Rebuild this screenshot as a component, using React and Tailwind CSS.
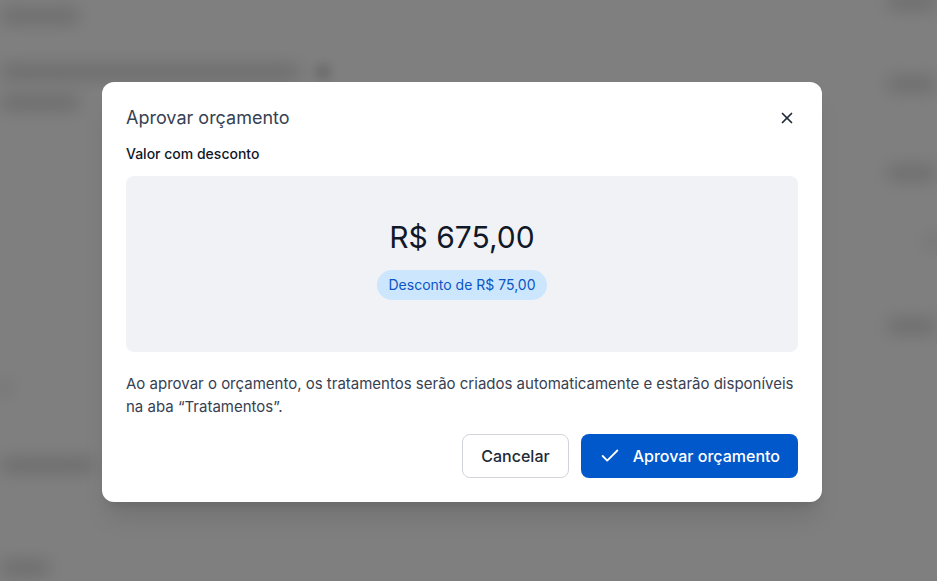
import { Check, X } from "lucide-react";

const Bar = ({ className }) => (
  <div className={`h-[12px] rounded-full bg-[#cdcdcd] blur-[9px] ${className}`} />
);

const BackgroundPage = () => {
  return (
    <div className="flex justify-between h-[581px] bg-white overflow-hidden">
      <div className="flex flex-col pt-[10px]">
        <Bar className="w-[80px]" />
        <div className="flex items-center gap-4 mt-[43px]">
          <Bar className="w-[300px]" />
          <div className="w-[14px] h-[14px] rounded-full bg-[#c4c4c4] blur-[6px]" />
        </div>
        <Bar className="w-[80px] mt-[18px]" />
        <Bar className="w-[10px] mt-[272px]" />
        <Bar className="w-[95px] mt-[66px]" />
        <Bar className="w-[50px] mt-[91px]" />
      </div>
      <div className="flex flex-col items-end pt-0">
        <Bar className="w-[50px] -mt-[4px]" />
        <Bar className="w-[50px] mt-[70px]" />
        <Bar className="w-[50px] mt-[77px]" />
        <Bar className="w-[10px] mt-[56px]" />
        <Bar className="w-[50px] mt-[73px]" />
      </div>
    </div>
  );
};

const App = () => {
  return (
    <div
      className="relative w-[937px] h-[581px] overflow-hidden"
      style={{ fontFamily: "Inter, 'Noto Sans', sans-serif" }}
    >
      <BackgroundPage />
      <div className="absolute inset-0 bg-black/50 flex items-start justify-start pt-[82px] pl-[102px]">
        <div className="w-[720px] bg-white rounded-xl px-6 pt-6 pb-6 shadow-xl">
          <div className="flex items-center justify-between h-6">
            <h2 className="text-[18px] leading-6 text-[#374151]">Aprovar orçamento</h2>
            <button className="text-[#1f2937] mr-[2px]">
              <X size={18} strokeWidth={2.25} />
            </button>
          </div>

          <p className="mt-[14px] text-sm leading-5 font-medium text-[#111827]">
            Valor com desconto
          </p>

          <div className="mt-3 h-[176px] rounded-lg bg-[#f0f2f5] flex flex-col items-center justify-center gap-[15px] pb-[10px]">
            <span className="text-[30px] leading-9 font-normal text-[#111827]">
              R$ 675,00
            </span>
            <span className="px-3 h-[30px] flex items-center rounded-full bg-[#cce6fd] text-sm text-[#0b55c4]">
              Desconto de R$ 75,00
            </span>
          </div>

          <p className="mt-[20px] text-[15px] leading-[23px] text-[#374151]">
            Ao aprovar o orçamento, os tratamentos serão criados automaticamente e estarão disponíveis na aba “Tratamentos”.
          </p>

          <div className="mt-4 flex justify-end gap-3">
            <button className="h-11 px-[18px] rounded-lg border border-[#d1d5db] text-base text-[#1f2937] font-medium bg-white">
              Cancelar
            </button>
            <button className="h-11 px-[18px] rounded-lg bg-[#0058cb] text-base text-white font-medium flex items-center gap-3">
              <Check size={22} strokeWidth={2} />
              Aprovar orçamento
            </button>
          </div>
        </div>
      </div>
    </div>
  );
};

export default App;
